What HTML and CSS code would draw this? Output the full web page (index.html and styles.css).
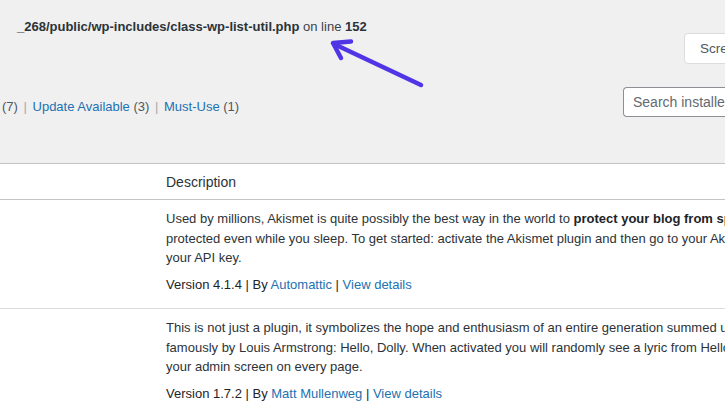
FILE: index.html
```html
<!DOCTYPE html>
<html>
<head>
<meta charset="utf-8">
<link rel="stylesheet" href="styles.css">
</head>
<body>
<div class="page">
  <div class="top">
    <div class="error"><b>_268/public/wp-includes/class-wp-list-util.php</b> on line <b>152</b></div>
    <div class="screen-row">
      <button class="screen-btn">Screen Options</button>
    </div>
    <div class="filter-row">
      <div class="subsubsub">(7) <span class="sep">|</span> <a>Update Available</a> <span class="count">(3)</span> <span class="sep">|</span> <a>Must-Use</a> <span class="count">(1)</span></div>
      <div class="search"><span class="placeholder">Search installed plugins...</span></div>
    </div>
  </div>
  <div class="table">
    <div class="row head">
      <div class="col-name"></div>
      <div class="col-desc">Description</div>
    </div>
    <div class="row">
      <div class="col-name"></div>
      <div class="col-desc">
        <p class="desc">Used by millions, Akismet is quite possibly the best way in the world to <strong>protect your blog from spam</strong>. It keeps your site<br>protected even while you sleep. To get started: activate the Akismet plugin and then go to your Akismet Settings page to set up<br>your API key.</p>
        <p class="meta">Version 4.1.4 | By <a>Automattic</a> | <a>View details</a></p>
      </div>
    </div>
    <div class="row">
      <div class="col-name"></div>
      <div class="col-desc">
        <p class="desc">This is not just a plugin, it symbolizes the hope and enthusiasm of an entire generation summed up in two words sung most<br>famously by Louis Armstrong: Hello, Dolly. When activated you will randomly see a lyric from <cite>Hello, Dolly</cite> in the upper right of<br>your admin screen on every page.</p>
        <p class="meta">Version 1.7.2 | By <a>Matt Mullenweg</a> | <a>View details</a></p>
      </div>
    </div>
  </div>
  <svg class="arrow" width="725" height="408" viewBox="0 0 725 408">
    <g stroke="#5035e6" stroke-width="4.5" stroke-linecap="round" stroke-linejoin="round" fill="none">
      <line x1="421" y1="85" x2="334" y2="44"/>
      <polyline points="351,41.5 333,43 341,58"/>
    </g>
  </svg>
</div>
</body>
</html>
```
FILE: styles.css
```css
html, body {
  margin: 0;
  padding: 0;
}
body {
  width: 725px;
  height: 408px;
  overflow: hidden;
  background: #fff;
  font-family: "Liberation Sans", Arial, sans-serif;
  font-size: 13px;
  color: #1d2327;
}
.page {
  position: relative;
  width: 725px;
  height: 408px;
  overflow: hidden;
}
.top {
  background: #f0f0f1;
  height: 163px;
  border-bottom: 1px solid #c3c4c7;
  overflow: hidden;
}
.error {
  padding: 19px 0 0 17px;
  height: 16px;
  line-height: 16px;
  color: #3c434a;
  font-size: 13px;
  white-space: nowrap;
}
.error b {
  color: #2c3338;
}
.screen-row {
  margin-top: -2px;
  height: 31px;
  padding-left: 684px;
}
.screen-btn {
  display: block;
  height: 31px;
  width: 120px;
  margin: 0;
  background: #fff;
  border: 1px solid #dcdcde;
  border-radius: 4px;
  padding: 0 0 0 15px;
  text-align: left;
  font-family: "Liberation Sans", Arial, sans-serif;
  font-size: 13.5px;
  color: #50575e;
}
.filter-row {
  display: flex;
  justify-content: space-between;
  align-items: flex-start;
  margin-top: 23px;
  height: 30px;
}
.subsubsub {
  margin-top: 11px;
  line-height: 18px;
  padding-left: 2px;
  font-size: 13px;
  color: #50575e;
  white-space: nowrap;
}
.subsubsub a {
  color: #2271b1;
}
.subsubsub .sep {
  color: #a7aaad;
  padding: 0 2px;
}
.search {
  width: 102px;
  height: 30px;
  box-sizing: border-box;
  border: 1px solid #8c8f94;
  border-right: none;
  border-radius: 4px 0 0 4px;
  background: #fff;
  padding-left: 9px;
  display: flex;
  align-items: center;
  overflow: hidden;
  white-space: nowrap;
  font-size: 14px;
  color: #646970;
}
.table {
  background: #fff;
}
.row {
  display: flex;
  border-bottom: 1px solid #dcdcde;
}
.row.head {
  height: 35px;
  align-items: center;
  border-bottom: 1px solid #c3c4c7;
}
.col-name {
  width: 166px;
  flex: none;
}
.col-desc {
  flex: 1;
  white-space: nowrap;
  font-size: 13px;
  color: #1d2327;
}
.head .col-desc {
  color: #2c3338;
  font-size: 14px;
}
.desc {
  margin: 0;
  padding-top: 9px;
  line-height: 19.5px;
  color: #2c3338;
}
.desc strong {
  color: #1d2327;
}
.desc cite {
  font-style: normal;
}
.meta {
  margin: 7px 0 0;
  padding-bottom: 14.5px;
  line-height: 19px;
  color: #1d2327;
}
.meta a {
  color: #2271b1;
}
.arrow {
  position: absolute;
  left: 0;
  top: 0;
  pointer-events: none;
}
```
